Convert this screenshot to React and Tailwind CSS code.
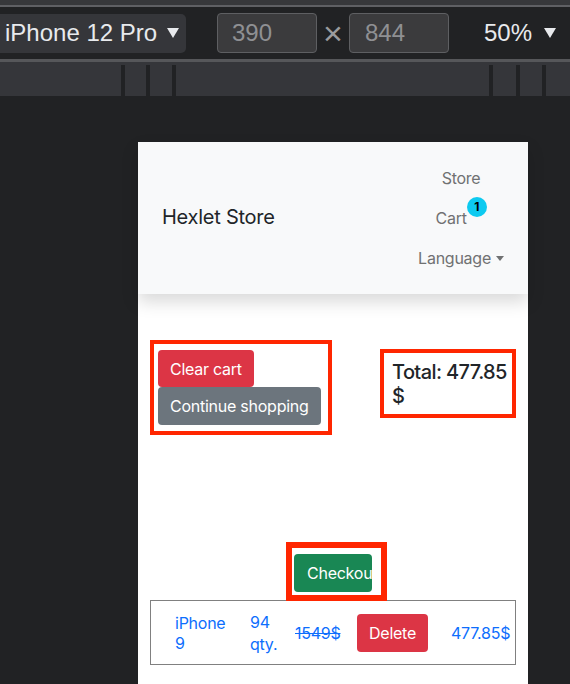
import React from 'react'

const rulerMarks = [
  { left: 121, w: 4 },
  { left: 21, w: 4 },
  { left: 22, w: 4 },
  { left: 313, w: 4 },
  { left: 23, w: 4 },
  { left: 22, w: 4 },
]

function Caret({ className }) {
  return (
    <svg width="12" height="10" viewBox="0 0 12 10" className={className}>
      <polygon points="0,0 12,0 6,10" fill="currentColor" />
    </svg>
  )
}

function DevToolbar() {
  return (
    <div className="font-['Liberation_Sans',Arial,sans-serif]">
      <div className="h-[5px] bg-[#37383b]" />
      <div className="h-[2px] bg-[#5f6064]" />
      <div className="h-[52px] bg-[#212224] flex items-center">
        <div className="w-[186px] h-[39px] bg-[#35363a] rounded-r-[5px] flex items-center pl-[5px] text-[24px] text-[#e8eaed]">
          <span>iPhone 12 Pro</span>
          <Caret className="ml-[10px] text-[#e8eaed]" />
        </div>
        <div className="ml-[31px] w-[100px] h-[40px] bg-[#3b3b3d] border border-[#5e5f62] rounded-[4px] flex items-center pl-[14px] text-[24px] text-[#8f9093]">
          390
        </div>
        <span className="w-[32px] text-center text-[34px] leading-none text-[#9a9b9e]">×</span>
        <div className="w-[100px] h-[40px] bg-[#3b3b3d] border border-[#5e5f62] rounded-[4px] flex items-center pl-[15px] text-[24px] text-[#8f9093]">
          844
        </div>
        <span className="ml-[35px] text-[24px] text-[#e8eaed]">50%</span>
        <Caret className="ml-[12px] text-[#e8eaed]" />
      </div>
      <div className="h-[3px] bg-[#56575a]" />
      <div className="h-[34px] bg-[#35363a] pt-[3px] flex">
        {rulerMarks.map((m, i) => (
          <div
            key={i}
            className="h-full bg-[#212224]"
            style={{ marginLeft: m.left, width: m.w }}
          />
        ))}
      </div>
    </div>
  )
}

function Navbar() {
  return (
    <div className="relative z-10 h-[152px] bg-[#f8f9fa] shadow-[0_8px_16px_rgba(0,0,0,0.15)] flex items-center justify-between pl-6 pr-6">
      <span className="text-[20px] leading-[30px] text-[#212529] mt-[-3px]">Hexlet Store</span>
      <div className="flex flex-col items-center text-[16px] leading-6 text-[#707172]">
        <span className="py-2">Store</span>
        <span className="py-2 flex items-start">
          <span>Cart</span>
          <span className="relative top-[-9px] w-[20px] h-[20px] rounded-full bg-[#0dcaf0] text-black text-[12px] font-bold flex items-center justify-center">
            1
          </span>
        </span>
        <span className="py-2 flex items-center">
          Language
          <span className="ml-[5px] mt-[1px] border-t-[5px] border-x-[4px] border-x-transparent border-t-[#707172]" />
        </span>
      </div>
    </div>
  )
}

export default function App() {
  return (
    <div className="w-[570px] h-[684px] overflow-hidden bg-[#212224] flex flex-col">
      <DevToolbar />
      <div className="mt-[46px] ml-[138px] w-[390px] flex-1 bg-white font-['Inter','Noto_Sans',sans-serif] tracking-[-0.25px]">
        <Navbar />

        <div className="mt-[46px] px-3 flex justify-between items-start">
          <div className="border-4 border-[#ff2600] pt-[6px] pb-[6px] pl-1 pr-[7px] flex flex-col items-start">
            <button className="h-[37px] px-3 rounded-[4px] bg-[#dc3545] text-white text-[16px]">
              Clear cart
            </button>
            <button className="h-[38px] px-3 rounded-[4px] bg-[#6c757d] text-white text-[16px]">
              Continue shopping
            </button>
          </div>
          <div className="mt-[9px] w-[136px] h-[69px] border-4 border-[#ff2600] pl-2 pt-[7px]">
            <div className="w-[124px] text-[20px] leading-6 font-medium tracking-[-0.6px] text-[#212529]">
              Total: 477.85 $
            </div>
          </div>
        </div>

        <div className="mt-[107px] pl-[148px] relative z-10">
          <div className="w-[101px] h-[59px] border-[6px] border-[#ff2600] bg-white pl-[2px] pt-[6px]">
            <button className="w-[78px] h-[38px] overflow-hidden whitespace-nowrap text-left pl-[13px] rounded-[4px] bg-[#198754] text-white text-[16px]">
              Checkout
            </button>
          </div>
        </div>

        <div className="mx-3 -mt-[1px] h-[65px] border border-[#808080] flex items-center text-[16px] text-[#0d6efd]">
          <div className="w-[99px] pl-[24px] leading-5">
            iPhone
            <br />9
          </div>
          <div className="w-[45px] leading-[22px]">
            94
            <br />
            qty.
          </div>
          <div className="w-[62px] line-through">1549$</div>
          <div className="w-[94px]">
            <button className="h-[38px] px-3 rounded-[4px] bg-[#dc3545] text-white">Delete</button>
          </div>
          <div>477.85$</div>
        </div>
      </div>
    </div>
  )
}
